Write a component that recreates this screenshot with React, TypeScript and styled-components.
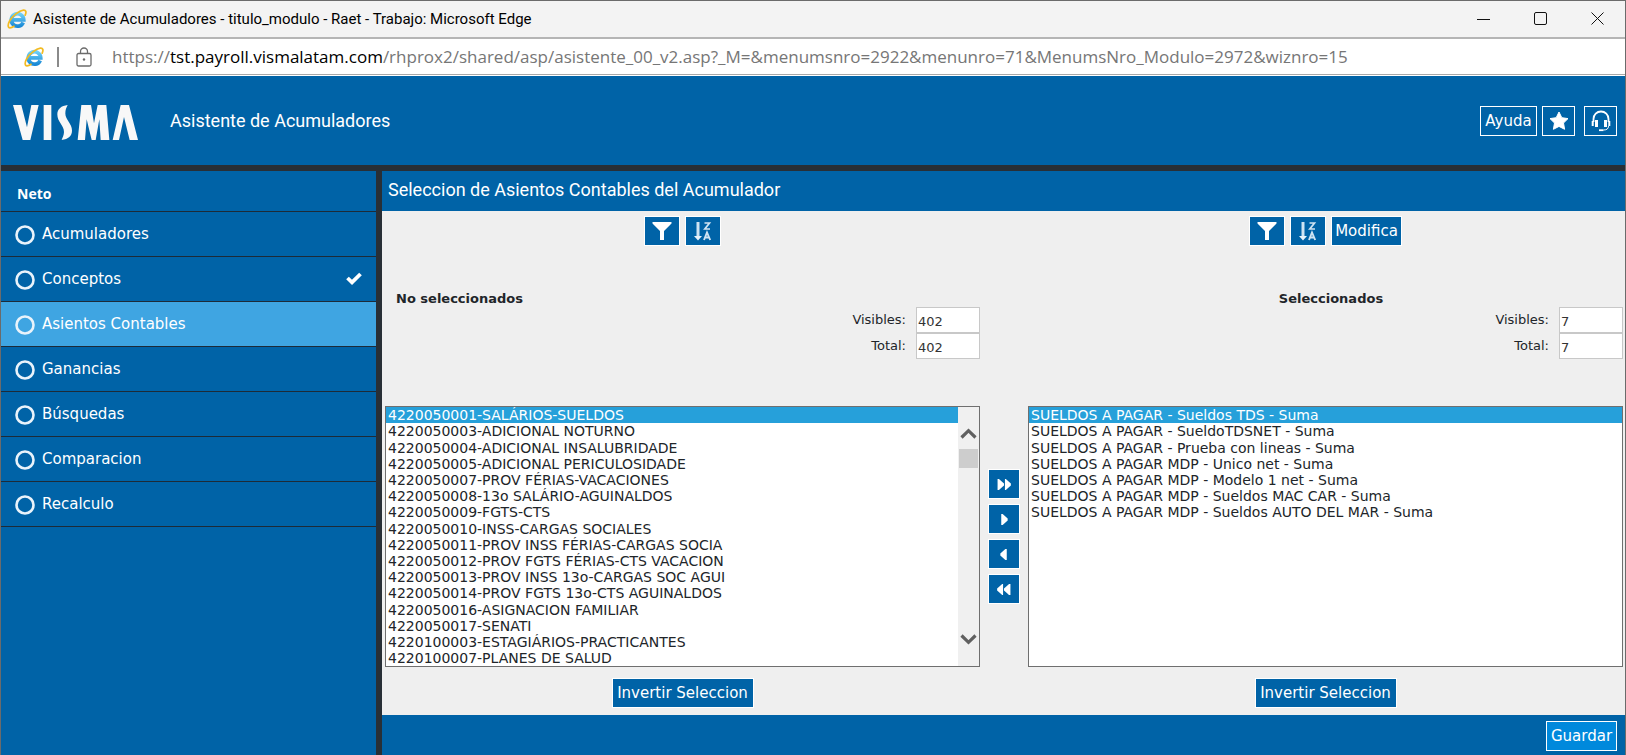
import React from 'react';
import styled, { createGlobalStyle } from 'styled-components';

const ui = '"Segoe UI", Roboto, "Open Sans", sans-serif';
const verdana = '"DejaVu Sans", Verdana, sans-serif';
const blue = '#0063a7';
const dark = '#282f36';

const GlobalStyle = createGlobalStyle`
  *, *::before, *::after { box-sizing: border-box; }
  body { margin: 0; background: ${blue}; }
  button, input, select { font-family: ${verdana}; margin: 0; }
  svg { display: block; flex: none; }
`;

const Window = styled.div`
  min-height: 100vh;
  display: flex;
  flex-direction: column;
  border: 1px solid #6b6b6b;
  border-bottom: 0;
  background: ${blue};
  font-family: ${verdana};
  color: #212529;
`;

const TitleBar = styled.div`
  height: 38px;
  display: flex;
  align-items: center;
  padding: 0 13px 0 6px;
  background: #f3f3f3;
  border-bottom: 2px solid #b5b5b5;
  font: 15px/20px ${ui};
  color: #000;
`;

const WindowTitle = styled.span`
  flex: 1;
  padding-left: 6px;
`;

const WindowControls = styled.div`
  display: flex;
  gap: 29px;
`;

const WindowControl = styled.button`
  width: 28px;
  height: 28px;
  padding: 0;
  border: 0;
  background: none;
  display: grid;
  place-items: center;
`;

const AddressBar = styled.div`
  height: 36px;
  display: flex;
  align-items: center;
  padding: 0 16px 0 23px;
  background: #fff;
  border-bottom: 1px solid #a8a8a8;
`;

const Divider = styled.span`
  width: 2px;
  height: 20px;
  margin: 0 17px 0 13px;
  background: #8a8a8a;
`;

const Url = styled.span`
  padding-left: 20px;
  font: 17px/24px "Open Sans", sans-serif;
  color: #767676;
  white-space: nowrap;
  b { font-weight: 400; color: #000; }
`;

const Header = styled.header`
  height: 96px;
  display: flex;
  align-items: center;
  padding: 0 8px 0 12px;
  border-top: 1px solid #fff;
  border-bottom: 6px solid ${dark};
  background: ${blue};
  color: #fff;
`;

const Logo = styled.div`
  width: 157px;
  padding-top: 4px;
`;

const AppTitle = styled.h1`
  flex: 1;
  margin: 0;
  font: 18px/24px ${ui};
`;

const HeaderActions = styled.div`
  display: flex;
  gap: 9px;
`;

const ActionGroup = styled.div`
  display: flex;
  gap: 5px;
`;

const Button = styled.button<{ $width?: number; $bright?: boolean }>`
  height: 30px;
  width: ${p => (p.$width ? `${p.$width}px` : 'auto')};
  padding: 0 4px;
  display: inline-flex;
  align-items: center;
  justify-content: center;
  flex: none;
  border: 1px solid #fff;
  border-radius: 0;
  background: ${p => (p.$bright ? '#0089dc' : blue)};
  color: #fff;
  font-size: 15px;
  line-height: 20px;
  white-space: nowrap;
`;

const Body = styled.div`
  flex: 1;
  display: grid;
  grid-template-columns: 375px minmax(0, 1fr);
  gap: 6px;
  background: ${dark};
`;

const Sidebar = styled.nav`
  background: ${blue};
  color: #fff;
`;

const SidebarTitle = styled.h2`
  height: 41px;
  margin: 0;
  padding: 5px 16px 0;
  border-bottom: 1px solid #1d2b38;
  font: bold 14px/35px "Open Sans", sans-serif;
`;

const Step = styled.button<{ $active?: boolean }>`
  width: 100%;
  height: 45px;
  display: flex;
  align-items: center;
  gap: 7px;
  padding: 0 14px 0 13px;
  border: 0;
  border-bottom: 1px solid #1d2b38;
  background: ${p => (p.$active ? '#3fa5e2' : blue)};
  color: #fff;
  font-size: 15px;
  line-height: 20px;
  text-align: left;
`;

const StepName = styled.span`
  flex: 1;
`;

const Main = styled.main`
  display: flex;
  flex-direction: column;
  background: #efefef;
`;

const MainTitle = styled.h2`
  height: 40px;
  margin: 0;
  padding: 0 6px;
  background: ${blue};
  color: #fff;
  font: 18px/38px ${ui};
`;

const Transfer = styled.div`
  flex: 1;
  display: grid;
  grid-template-columns: minmax(0, 1fr) 48px minmax(0, 1fr);
  grid-template-rows: auto minmax(261px, 1fr) auto;
  grid-template-areas:
    'leftTop . rightTop'
    'leftList moves rightList'
    'leftEnd . rightEnd';
  padding: 5px 2px 7px 3px;
`;

const Top = styled.section<{ $area: string }>`
  grid-area: ${p => p.$area};
  padding-bottom: 47px;
`;

const Tools = styled.div`
  display: flex;
  justify-content: center;
  gap: 5px;
`;

const ListTitle = styled.h3<{ $centered?: boolean }>`
  margin: 45px 0 0;
  padding-left: 11px;
  font-size: 13px;
  line-height: 16px;
  text-align: ${p => (p.$centered ? 'center' : 'left')};
`;

const Counter = styled.div`
  display: flex;
  justify-content: flex-end;
  gap: 10px;
  font-size: 13px;
  line-height: 26px;
`;

const CounterInput = styled.input`
  width: 64px;
  height: 26px;
  padding: 2px 1px 0;
  border: 1px solid #c8c8c8;
  border-radius: 0;
  background: #fff;
  color: #333;
  font-size: 13px;
`;

const ListFrame = styled.div<{ $area: string }>`
  grid-area: ${p => p.$area};
  display: flex;
  border: 1px solid #6f6f6f;
  background: #fff;
`;

const List = styled.select`
  flex: 1;
  min-width: 0;
  height: 100%;
  padding: 0;
  border: 0;
  border-radius: 0;
  outline: 0;
  background: #fff;
  color: #212529;
  font-size: 14px;
  scrollbar-width: none;
`;

const Item = styled.option`
  padding: 0 2px;
  line-height: 16px;
  min-height: 16px;

  &:nth-child(5n + 3) { padding-top: 1px; }
  &:checked {
    color: #fff;
    background: #26a0da linear-gradient(#26a0da, #26a0da);
  }
`;

const ScrollTrack = styled.div`
  width: 21px;
  display: flex;
  flex-direction: column;
  align-items: center;
  padding: 20px 1px;
  background: #f0f0f0;
`;

const ScrollThumb = styled.div`
  width: 19px;
  height: 19px;
  margin: 9px 0 auto;
  background: #cdcdcd;
`;

const Moves = styled.div`
  grid-area: moves;
  display: flex;
  flex-direction: column;
  align-items: center;
  justify-content: center;
  gap: 5px;
`;

const ListEnd = styled.div<{ $area: string }>`
  grid-area: ${p => p.$area};
  display: flex;
  justify-content: center;
  padding-top: 11px;
`;

const Footer = styled.footer`
  height: 40px;
  display: flex;
  justify-content: flex-end;
  padding: 6px 8px 4px;
  background: ${blue};
`;

const VismaLogo = () => (
  <svg width="125" height="35" viewBox="0 0 375 104" preserveAspectRatio="none" fill="#f8f8f8" role="img" aria-label="VISMA">
    <path d="M0 0h25l17 66L55 0h22L52 104H29z" />
    <path d="M92 0h23v104H92z" />
    <path d="M164 0C145 2 133 12 133 28c0 22 20 32 20 52 0 10-5 17-7 24 20-2 31-12 31-28 0-22-20-32-20-51 0-11 3-17 7-25z" />
    <path d="M194 104L205 0h29l9 54 11-54h26l9 104h-26l-4-62-11 62h-12l-15-62-5 62z" />
    <path d="M299 104L323 0h25l27 104h-25l-17-68-15 68z" />
  </svg>
);

const BrowserIcon = ({ id }: { id: string }) => (
  <svg width="20" height="20" viewBox="0 0 20 20" fill="none" aria-hidden="true">
    <defs>
      <linearGradient id={id} x1="0" y1="0" x2="0" y2="1">
        <stop offset="0" stopColor="#6fd0f7" />
        <stop offset="1" stopColor="#1b8ad6" />
      </linearGradient>
    </defs>
    <path d="M16.2 13.4A6.200 6.200 0 1 1 16.700 10.800H6" stroke={`url(#${id})`} strokeWidth="3.800" />
    <path d="M18.2 6.2C19.600 3 19 .9 16.400 1.200 12 1.800 5.400 7 2.600 12 .6 15.600.7 18.800 3 18.800c1.300 0 2.800-.6 4-1.500" stroke="#f2bb23" strokeWidth="1.700" strokeLinecap="round" />
  </svg>
);

const LockIcon = () => (
  <svg width="16" height="20" viewBox="0 0 16 20" fill="none" stroke="#6b6b6b" strokeWidth="1.3" aria-hidden="true">
    <rect x="1" y="6.500" width="14" height="12.500" rx="1.500" />
    <path d="M4.500 6.500V4.500a3.500 3.500 0 0 1 7 0v2" />
    <circle cx="8" cy="12.500" r="1.200" fill="#6b6b6b" stroke="none" />
  </svg>
);

const StarIcon = () => (
  <svg width="20" height="20" viewBox="0 0 20 20" aria-hidden="true">
    <path d="M10 1l2.800 5.700 6.200.9-4.500 4.400 1.100 6.300L10 15.400l-5.600 2.900L5.500 12 1 7.600l6.200-.9z" fill="#fff" stroke="#fff" strokeLinejoin="round" />
  </svg>
);

const HeadsetIcon = () => (
  <svg width="20" height="22" viewBox="0 0 20 22" fill="none" stroke="#fff" aria-hidden="true">
    <path d="M2.500 12V9a7.500 7.500 0 0 1 15 0v3" strokeWidth="1.800" />
    <path d="M5.500 10v7M14.500 10v7" strokeWidth="3" />
    <path d="M1.700 11v5M18.300 11v5" strokeWidth="2" />
    <path d="M17.500 16c0 3-2 4-5 4" strokeWidth="1" />
    <path d="M8 20.200h4.500" strokeWidth="1.800" />
  </svg>
);

const CircleIcon = () => (
  <svg width="21" height="21" viewBox="0 0 21 21" aria-hidden="true">
    <circle cx="11" cy="11" r="8.500" fill="none" stroke="#e9f3fb" strokeWidth="2.600" />
  </svg>
);

const CheckIcon = () => (
  <svg width="16" height="14" viewBox="0 0 16 14" aria-hidden="true">
    <path d="M1.500 6l4.500 4.300L14.500 2" fill="none" stroke="#fff" strokeWidth="3.800" />
  </svg>
);

const FilterIcon = () => (
  <svg width="20" height="18" viewBox="0 0 20 18" aria-hidden="true">
    <path d="M.5 0h19v1.500L12 9v9H8V9L.5 1.500z" fill="#fff" />
  </svg>
);

const SortIcon = () => (
  <svg width="18" height="20" viewBox="0 0 18 20" fill="none" stroke="#cfe3f2" aria-hidden="true">
    <path d="M4 1v14" strokeWidth="3" />
    <path d="M0 15h8l-4 4.500z" fill="#e8f2fa" stroke="none" />
    <path d="M10.500 2h5L10.800 8h5.200" strokeWidth="1.700" />
    <path d="M10 19l3-7.500 3.200 7.500M11 16.500h4.300" strokeWidth="1.900" />
  </svg>
);

const MoveIcon = ({ all, back }: { all?: boolean; back?: boolean }) => {
  const paths = all
    ? ['M1 0h1.500L8 5v2L2.500 12H1z', 'M9 0h1l5.500 5v2L10 12H9z']
    : ['M5 0h1.500L12 5v2L6.500 12H5z'];
  return (
    <svg width="16" height="11" viewBox="0 0 16 12" fill="#fff" aria-hidden="true">
      <g transform={back ? 'rotate(180 8 6)' : undefined}>
        {paths.map(d => <path key={d} d={d} />)}
      </g>
    </svg>
  );
};

const Chevron = ({ down }: { down?: boolean }) => (
  <svg width="17" height="13" viewBox="0 0 17 13" fill="none" stroke="#606060" strokeWidth="3.200" aria-hidden="true">
    <path d={down ? 'M1.500 2.500l7 6.800 7-6.800' : 'M1.500 10.500l7-6.800 7 6.800'} />
  </svg>
);

const steps = [
  { name: 'Acumuladores' },
  { name: 'Conceptos', done: true },
  { name: 'Asientos Contables', active: true },
  { name: 'Ganancias' },
  { name: 'Búsquedas' },
  { name: 'Comparacion' },
  { name: 'Recalculo' },
];

const available = [
  '4220050001-SALÁRIOS-SUELDOS',
  '4220050003-ADICIONAL NOTURNO',
  '4220050004-ADICIONAL INSALUBRIDADE',
  '4220050005-ADICIONAL PERICULOSIDADE',
  '4220050007-PROV FÉRIAS-VACACIONES',
  '4220050008-13o SALÁRIO-AGUINALDOS',
  '4220050009-FGTS-CTS',
  '4220050010-INSS-CARGAS SOCIALES',
  '4220050011-PROV INSS FÉRIAS-CARGAS SOCIA',
  '4220050012-PROV FGTS FÉRIAS-CTS VACACION',
  '4220050013-PROV INSS 13o-CARGAS SOC AGUI',
  '4220050014-PROV FGTS 13o-CTS AGUINALDOS',
  '4220050016-ASIGNACION FAMILIAR',
  '4220050017-SENATI',
  '4220100003-ESTAGIÁRIOS-PRACTICANTES',
  '4220100007-PLANES DE SALUD',
];

const selected = [
  'SUELDOS A PAGAR - Sueldos TDS - Suma',
  'SUELDOS A PAGAR - SueldoTDSNET - Suma',
  'SUELDOS A PAGAR - Prueba con lineas - Suma',
  'SUELDOS A PAGAR MDP - Unico net - Suma',
  'SUELDOS A PAGAR MDP - Modelo 1 net - Suma',
  'SUELDOS A PAGAR MDP - Sueldos MAC CAR - Suma',
  'SUELDOS A PAGAR MDP - Sueldos AUTO DEL MAR - Suma',
];

interface SideProps {
  side: 'left' | 'right';
  title: string;
  count: number;
  items: string[];
  scroll?: boolean;
  editable?: boolean;
}

const Side = ({ side, title, count, items, scroll, editable }: SideProps) => (
  <>
    <Top $area={`${side}Top`}>
      <Tools>
        <Button $width={36} aria-label="Filtrar"><FilterIcon /></Button>
        <Button $width={36} aria-label="Ordenar"><SortIcon /></Button>
        {editable && <Button $width={71}>Modifica</Button>}
      </Tools>
      <ListTitle id={`${side}-title`} $centered={editable}>{title}</ListTitle>
      <Counter>
        <label htmlFor={`${side}-visible`}>Visibles:</label>
        <CounterInput id={`${side}-visible`} readOnly value={count} />
      </Counter>
      <Counter>
        <label htmlFor={`${side}-total`}>Total:</label>
        <CounterInput id={`${side}-total`} readOnly value={count} />
      </Counter>
    </Top>
    <ListFrame $area={`${side}List`}>
      <List multiple defaultValue={[items[0]]} aria-labelledby={`${side}-title`}>
        {items.map(item => <Item key={item} value={item}>{item}</Item>)}
      </List>
      {scroll && (
        <ScrollTrack>
          <Chevron />
          <ScrollThumb />
          <Chevron down />
        </ScrollTrack>
      )}
    </ListFrame>
    <ListEnd $area={`${side}End`}>
      <Button $width={142}>Invertir Seleccion</Button>
    </ListEnd>
  </>
);

export default function App() {
  return (
    <>
      <GlobalStyle />
      <Window>
        <TitleBar>
          <BrowserIcon id="title-e" />
          <WindowTitle>Asistente de Acumuladores - titulo_modulo - Raet - Trabajo: Microsoft Edge</WindowTitle>
          <WindowControls>
            <WindowControl aria-label="Minimizar">
              <svg width="14" height="14" stroke="#111"><path d="M0 7.500h13" /></svg>
            </WindowControl>
            <WindowControl aria-label="Maximizar">
              <svg width="14" height="14" fill="none" stroke="#111"><rect x=".5" y=".5" width="12" height="12" rx="1.500" /></svg>
            </WindowControl>
            <WindowControl aria-label="Cerrar">
              <svg width="14" height="14" stroke="#111"><path d="M.5.5l12 12M12.500.5l-12 12" /></svg>
            </WindowControl>
          </WindowControls>
        </TitleBar>
        <AddressBar>
          <BrowserIcon id="address-e" />
          <Divider />
          <LockIcon />
          <Url>
            https://<b>tst.payroll.vismalatam.com</b>/rhprox2/shared/asp/asistente_00_v2.asp?_M=&amp;menumsnro=2922&amp;menunro=71&amp;MenumsNro_Modulo=2972&amp;wiznro=15
          </Url>
        </AddressBar>
        <Header>
          <Logo><VismaLogo /></Logo>
          <AppTitle>Asistente de Acumuladores</AppTitle>
          <HeaderActions>
            <ActionGroup>
              <Button $width={57}>Ayuda</Button>
              <Button $width={33} aria-label="Favoritos"><StarIcon /></Button>
            </ActionGroup>
            <Button $width={33} aria-label="Soporte"><HeadsetIcon /></Button>
          </HeaderActions>
        </Header>
        <Body>
          <Sidebar>
            <SidebarTitle>Neto</SidebarTitle>
            {steps.map(step => (
              <Step key={step.name} $active={step.active}>
                <CircleIcon />
                <StepName>{step.name}</StepName>
                {step.done && <CheckIcon />}
              </Step>
            ))}
          </Sidebar>
          <Main>
            <MainTitle>Seleccion de Asientos Contables del Acumulador</MainTitle>
            <Transfer>
              <Side side="left" title="No seleccionados" count={402} items={available} scroll />
              <Moves>
                <Button $width={32} aria-label="Agregar todos"><MoveIcon all /></Button>
                <Button $width={32} aria-label="Agregar"><MoveIcon /></Button>
                <Button $width={32} aria-label="Quitar"><MoveIcon back /></Button>
                <Button $width={32} aria-label="Quitar todos"><MoveIcon all back /></Button>
              </Moves>
              <Side side="right" title="Seleccionados" count={7} items={selected} editable />
            </Transfer>
            <Footer>
              <Button $width={71} $bright>Guardar</Button>
            </Footer>
          </Main>
        </Body>
      </Window>
    </>
  );
}
